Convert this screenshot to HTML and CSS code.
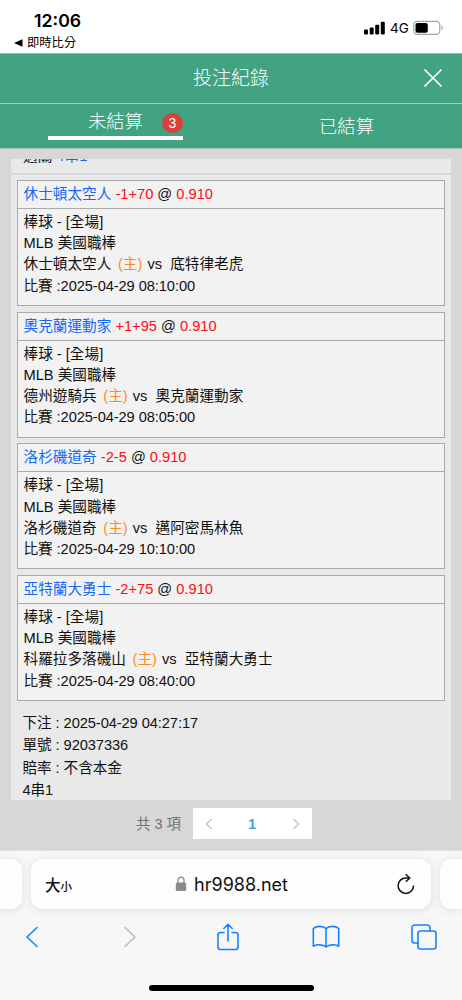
FILE: index.html
```
<!DOCTYPE html>
<html lang="zh-Hant">
<head>
    <meta charset="UTF-8">
    <meta name="viewport" content="width=device-width, initial-scale=1.0">
    <title>投注紀錄</title>
    <link rel="stylesheet" href="styles.css">
</head>
<body>
    <div class="status-bar">
        <div class="status-left">
            <div class="clock">12:06</div>
            <div class="back-app"><svg width="9" height="8" viewBox="0 0 9 8"><path d="M0 4L8.500 .2V7.800Z"/></svg>即時比分</div>
        </div>
        <div class="status-right">
            <svg width="21" height="14" viewBox="0 0 21 14"><rect x="0" y="8.500" width="4" height="5" rx="1"/><rect x="5.700" y="6.500" width="4" height="7" rx="1"/><rect x="11.200" y="3.700" width="4" height="9.800" rx="1"/><rect x="16.800" y=".8" width="4" height="12.700" rx="1"/></svg>
            <span class="network">4G</span>
            <svg class="battery" width="31" height="16" viewBox="0 0 31 16"><rect x=".8" y="1.300" width="26" height="13" rx="3.600" fill="none" stroke="#a5a5a5" stroke-width="1.200"/><rect x="2.500" y="3" width="12.300" height="9.700" rx="2"/><path d="M28.500 5.500Q30 6 30 7.800T28.500 10Z" fill="#aaa"/></svg>
        </div>
    </div>

    <header class="page-header">
        <h1>投注紀錄</h1>
        <svg class="close" width="20" height="20" viewBox="0 0 20 20"><path d="M1.500 1.500l17 17M18.500 1.500l-17 17"/></svg>
    </header>
    <nav class="tabs">
        <div class="tab active"><div class="tab-inner"><span>未結算</span><span class="badge">3</span></div></div>
        <div class="tab">已結算</div>
    </nav>

    <main class="content">
        <section class="ticket">
            <div class="ticket-title">
                <span>過關 <span class="team">4串1</span></span>
                <svg width="14" height="10" viewBox="0 0 14 10"><path d="M1.500 9L7 3l5.500 6"/></svg>
            </div>
            <div class="bets">
                <div class="bet">
                    <div class="bet-head"><span class="team">休士頓太空人</span> <span class="odds">-1+70</span> @ <span class="odds">0.910</span></div>
                    <div class="bet-body">
                        <div>棒球 - [全場]</div>
                        <div>MLB 美國職棒</div>
                        <div>休士頓太空人 <span class="home">(主)</span> vs &nbsp;底特律老虎</div>
                        <div class="time">比賽 :2025-04-29 08:10:00</div>
                    </div>
                </div>
                <div class="bet">
                    <div class="bet-head"><span class="team">奧克蘭運動家</span> <span class="odds">+1+95</span> @ <span class="odds">0.910</span></div>
                    <div class="bet-body">
                        <div>棒球 - [全場]</div>
                        <div>MLB 美國職棒</div>
                        <div>德州遊騎兵 <span class="home">(主)</span> vs &nbsp;奧克蘭運動家</div>
                        <div class="time">比賽 :2025-04-29 08:05:00</div>
                    </div>
                </div>
                <div class="bet">
                    <div class="bet-head"><span class="team">洛杉磯道奇</span> <span class="odds">-2-5</span> @ <span class="odds">0.910</span></div>
                    <div class="bet-body">
                        <div>棒球 - [全場]</div>
                        <div>MLB 美國職棒</div>
                        <div>洛杉磯道奇 <span class="home">(主)</span> vs &nbsp;邁阿密馬林魚</div>
                        <div class="time">比賽 :2025-04-29 10:10:00</div>
                    </div>
                </div>
                <div class="bet">
                    <div class="bet-head"><span class="team">亞特蘭大勇士</span> <span class="odds">-2+75</span> @ <span class="odds">0.910</span></div>
                    <div class="bet-body">
                        <div>棒球 - [全場]</div>
                        <div>MLB 美國職棒</div>
                        <div>科羅拉多落磯山 <span class="home">(主)</span> vs &nbsp;亞特蘭大勇士</div>
                        <div class="time">比賽 :2025-04-29 08:40:00</div>
                    </div>
                </div>
            </div>
            <div class="ticket-info">
                <div>下注 : 2025-04-29 04:27:17</div>
                <div>單號 : 92037336</div>
                <div>賠率 : 不含本金</div>
                <div>4串1</div>
            </div>
        </section>

        <div class="pagination">
            <span class="total">共 3 項</span>
            <div class="pager">
                <svg width="8" height="12" viewBox="0 0 8 12"><path d="M6.500 1L1.500 6l5 5"/></svg>
                <span class="current">1</span>
                <svg width="8" height="12" viewBox="0 0 8 12"><path d="M1.500 1l5 5-5 5"/></svg>
            </div>
        </div>
    </main>

    <footer class="browser">
        <div class="address-row">
            <div class="side-tab left"></div>
            <div class="address">
                <span class="text-size">大<small>小</small></span>
                <div class="url">
                    <svg width="12" height="16" viewBox="0 0 12 16"><rect x=".8" y="6.500" width="10.400" height="8.500" rx="1.600" fill="#8a8a8e"/><path d="M3 7V4.200a3 3 0 0 1 6 0V7" fill="none" stroke="#8a8a8e" stroke-width="1.300"/></svg>
                    <span>hr9988.net</span>
                </div>
                <svg class="reload" width="18" height="22" viewBox="0 0 18 22"><path d="M16.500 12.500A7.700 7.700 0 1 1 9 5h3.500M8.700 1.200L12.700 5 8.800 8.700"/></svg>
            </div>
            <div class="side-tab right"></div>
        </div>
        <div class="toolbar">
            <svg width="28" height="22" viewBox="0 0 14 22"><path d="M12 1.500L2 11l10 9.500"/></svg>
            <svg class="disabled" width="28" height="22" viewBox="0 0 14 22"><path d="M2 1.500L12 11 2 20.500"/></svg>
            <svg width="28" height="30" viewBox="0 0 24 30"><path d="M8 10.500H4.500A2.500 2.500 0 0 0 2 13v12a2.500 2.500 0 0 0 2.500 2.500h15A2.500 2.500 0 0 0 22 25V13a2.500 2.500 0 0 0-2.500-2.500H16M12 19V2.500M7.800 6.500L12 2.300l4.200 4.200"/></svg>
            <svg width="28" height="24" viewBox="0 0 28 24"><path d="M14 3.600C11.300.8 4.600.6 1.300 3.500v17.700c3.400-2 9.800-1.900 12.700.8 2.900-2.700 9.300-2.800 12.700-.8V3.500C23.400.6 16.700.8 14 3.600zM14 3.600V22"/></svg>
            <svg width="28" height="26" viewBox="0 0 26 26"><path d="M7 19H3.500A2.500 2.500 0 0 1 1 16.500v-13A2.500 2.500 0 0 1 3.500 1h13A2.500 2.500 0 0 1 19 3.500V7"/><rect x="7" y="7" width="18" height="18" rx="2.500"/></svg>
        </div>
        <div class="home-bar"></div>
    </footer>
</body>
</html>
```

FILE: styles.css
```
* {
    box-sizing: border-box;
}

body {
    margin: 0;
    height: 1000px;
    overflow: hidden;
    display: flex;
    flex-direction: column;
    background: #fff;
    color: #111;
    font-family: "Liberation Sans", "Noto Sans CJK TC", sans-serif;
    font-size: 14.65px;
}

svg {
    display: block;
    flex: none;
}

.status-bar {
    height: 53px;
    display: flex;
    justify-content: space-between;
    font-family: Inter, "Noto Sans CJK TC", sans-serif;
    color: #000;
}

.clock {
    margin: 10px 0 0 34px;
    font-size: 17.7px;
    line-height: 22px;
    font-weight: 600;
}

.back-app {
    display: flex;
    align-items: center;
    gap: 4px;
    margin: 2px 0 0 14px;
    font-size: 12.3px;
    line-height: 17px;
}

.status-right {
    display: flex;
    height: 16px;
    margin: 20px 18px 0 0;
    align-items: center;
}

.network {
    margin: 0 5px;
    width: 18px;
    font-size: 13.5px;
}

.page-header {
    position: relative;
    height: 51px;
    background: #41a381;
    border-top: 1px solid #8cc7b1;
    border-bottom: 1px solid #a5cfc1;
    display: flex;
    align-items: center;
    justify-content: center;
    color: #fff;
}

.page-header h1 {
    margin: 0;
    font-size: 19px;
    font-weight: 300;
    line-height: 28px;
}

.close {
    position: absolute;
    top: 14px;
    right: 19px;
    fill: none;
    stroke: #fff;
    stroke-width: 1.7;
}

.tabs {
    height: 45px;
    display: flex;
    background: #41a381;
    border-bottom: 1px solid #a7c9bd;
    color: #fff;
    font-size: 18.3px;
    font-weight: 300;
}

.tab {
    flex: 1;
    display: flex;
    align-items: center;
    justify-content: center;
    padding-bottom: 3px;
}

.tab.active {
    align-items: flex-start;
}

.tab-inner {
    width: 135px;
    height: 36px;
    padding-left: 40px;
    border-bottom: 4px solid #fff;
    display: flex;
    align-items: center;
    gap: 19px;
    line-height: 32px;
    white-space: nowrap;
}

.tab-inner > span:first-child {
    padding-top: 4px;
}

.badge {
    width: 21px;
    height: 20px;
    margin-top: 6px;
    border-radius: 50%;
    background: #d8403c;
    font-size: 14px;
    font-weight: 400;
    line-height: 20px;
    text-align: center;
}

.content {
    height: 701px;
    padding: 10px 11px 0;
    background: #d7d7d7;
}

.ticket {
    height: 641px;
    overflow: hidden;
    background: #e9e9e9;
}

.ticket-title {
    height: 29px;
    margin-top: -13px;
    padding: 0 12px;
    display: flex;
    align-items: flex-start;
    justify-content: space-between;
    line-height: 21px;
    border-bottom: 2px solid #d8d8d8;
}

.ticket-title svg {
    margin-top: 4px;
    fill: none;
    stroke: #888;
}

.team {
    color: #1568f5;
}

.odds {
    color: #fd0d12;
}

.home {
    margin: 0 1px 0 2.5px;
    color: #ff8c1a;
}

.time,
.ticket-info {
    letter-spacing: -.08px;
}

.bets {
    display: flex;
    flex-direction: column;
    gap: 5.7px;
    padding: 5px 6px 0 5.5px;
}

.bet {
    height: 126px;
    border: 1px solid #a9abab;
    background: #f2f2f2;
    color: #111;
}

.bet-head {
    height: 28px;
    padding: 0 6px;
    border-bottom: 1px solid #a9abab;
    line-height: 27px;
}

.bet-body {
    padding: 3px 6px 0;
    line-height: 21.2px;
}

.ticket-info {
    padding: 11px 11.5px 0;
    line-height: 22.4px;
}

.pagination {
    display: flex;
    align-items: center;
    margin-top: 8px;
    padding-left: 125px;
    color: #707174;
}

.total {
    width: 56.5px;
    padding-bottom: 2px;
    font-size: 14.5px;
    white-space: nowrap;
}

.pager {
    width: 119px;
    height: 31px;
    padding: 0 12px;
    display: flex;
    align-items: center;
    justify-content: space-between;
    background: #fff;
}

.pager svg {
    fill: none;
    stroke: #c0c4cc;
    stroke-width: 1.5;
}

.current {
    color: #409eff;
    font-weight: bold;
}

.browser {
    flex: 1;
    background: #f7f7f7;
    border-top: 1px solid #e2e2e2;
    font-family: Inter, "Noto Sans CJK TC", sans-serif;
}

.address-row {
    display: flex;
    justify-content: space-between;
    height: 50px;
    margin-top: 8px;
}

.address,
.side-tab {
    background: #fdfdfd;
    box-shadow: 0 1px 9px rgba(0, 0, 0, .1);
}

.side-tab {
    width: 22px;
}

.side-tab.left {
    border-radius: 0 11px 11px 0;
}

.side-tab.right {
    border-radius: 11px 0 0 11px;
}

.address {
    width: 400px;
    padding: 0 16px 0 14px;
    border-radius: 12px;
    display: flex;
    align-items: center;
    justify-content: space-between;
    color: #111;
}

.text-size {
    width: 42px;
    font-size: 15.5px;
    font-weight: 500;
}

.text-size small {
    font-size: 11.5px;
}

.url {
    display: flex;
    align-items: center;
    gap: 7px;
    margin-left: -21px;
    font-size: 18px;
}

.reload {
    fill: none;
    stroke: #111;
    stroke-width: 1.5;
}

.toolbar {
    height: 56px;
    padding: 0 24px 0 18px;
    display: flex;
    align-items: center;
    justify-content: space-between;
}

.toolbar svg {
    fill: none;
    stroke: #1583ff;
    stroke-width: 1.6;
    stroke-linecap: round;
    stroke-linejoin: round;
}

.toolbar .disabled {
    stroke: #bcbcbe;
}

.home-bar {
    width: 165px;
    height: 6px;
    margin: 20px auto 0;
    border-radius: 3px;
    background: #000;
}
```
